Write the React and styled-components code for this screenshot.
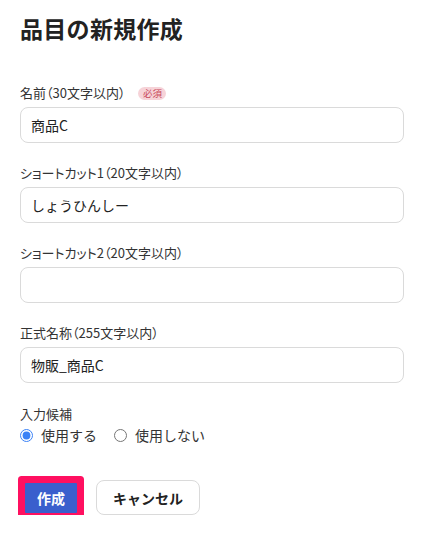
import styled, { createGlobalStyle } from 'styled-components'

const fields = [
  { label: '名前（30文字以内）', value: '商品C', required: true },
  { label: 'ショートカット1（20文字以内）', value: 'しょうひんしー' },
  { label: 'ショートカット2（20文字以内）', value: '' },
  { label: '正式名称（255文字以内）', value: '物販_商品C' },
]

export default function App() {
  return (
    <>
      <Global />
      <Page>
        <Title>品目の新規作成</Title>

        <Fields>
          {fields.map(f => (
            <Field key={f.label}>
              <Label>
                {f.label}
                {f.required && <Badge>必須</Badge>}
              </Label>
              <Input defaultValue={f.value} />
            </Field>
          ))}
        </Fields>

        <Choice>
          <Label>入力候補</Label>
          <Radios>
            <RadioItem>
              <input type="radio" name="suggest" defaultChecked />
              使用する
            </RadioItem>
            <RadioItem>
              <input type="radio" name="suggest" />
              使用しない
            </RadioItem>
          </Radios>
        </Choice>

        <Actions>
          <PrimaryBtn>作成</PrimaryBtn>
          <CancelBtn>キャンセル</CancelBtn>
        </Actions>
      </Page>
    </>
  )
}

const Global = createGlobalStyle`
  body {
    margin: 0; background: #fff;
    font-family: "Noto Sans CJK JP", "Noto Sans", sans-serif;
    color: #222;
  }
`
const Page = styled.div`
  padding: 14px 38px 0 20px;
  display: flex; flex-direction: column;
`
const Title = styled.h1`
  margin: 0; font-size: 23px; line-height: 28px; font-weight: 700;
  color: #222; letter-spacing: 0.3px;
`
const Fields = styled.div`
  margin-top: 42px;
  display: flex; flex-direction: column; gap: 21px;
`
const Field = styled.div`
  display: flex; flex-direction: column; gap: 5px;
`
const Label = styled.div`
  display: flex; align-items: center; gap: 13px;
  font-size: 13px; line-height: 18px; color: #333;
  font-feature-settings: "palt";
`
const Badge = styled.span`
  display: inline-flex; align-items: center; justify-content: center;
  width: 28px; height: 13px; border-radius: 7px;
  background: #f6d3d8; color: #c8485a;
  font-size: 9.5px; line-height: 13px;
`
const Input = styled.input`
  box-sizing: border-box; width: 100%; height: 36px;
  border: 1px solid #dadada; border-radius: 8px;
  padding: 0 10px; font: inherit; font-size: 14px; color: #222;
  background: #fff; outline: none;
`
const Choice = styled.div`
  margin-top: 22px;
  display: flex; flex-direction: column; gap: 2px;
`
const Radios = styled.div`
  display: flex; align-items: center; gap: 17px; height: 20px;
`
const RadioItem = styled.label`
  display: flex; align-items: center; gap: 8px;
  font-size: 14px; color: #333;
  input { margin: 0; width: 13px; height: 13px; accent-color: #3b82f6; }
`
const Actions = styled.div`
  margin-top: 35px;
  display: flex; align-items: center; gap: 19px;
  padding-left: 5px;
`
const PrimaryBtn = styled.button`
  height: 30px; padding: 0 12px; border: none;
  border-radius: 1px; background: #3a5fcd; color: #fff;
  font: inherit; font-size: 14px; font-weight: 700;
  box-shadow: 0 0 0 7px #ff1060;
  outline: none;
`
const CancelBtn = styled.button`
  height: 35px; padding: 0 16px;
  border: 1px solid #dadada; border-radius: 8px; background: #fff;
  font: inherit; font-size: 14px; font-weight: 700; color: #222;
`
